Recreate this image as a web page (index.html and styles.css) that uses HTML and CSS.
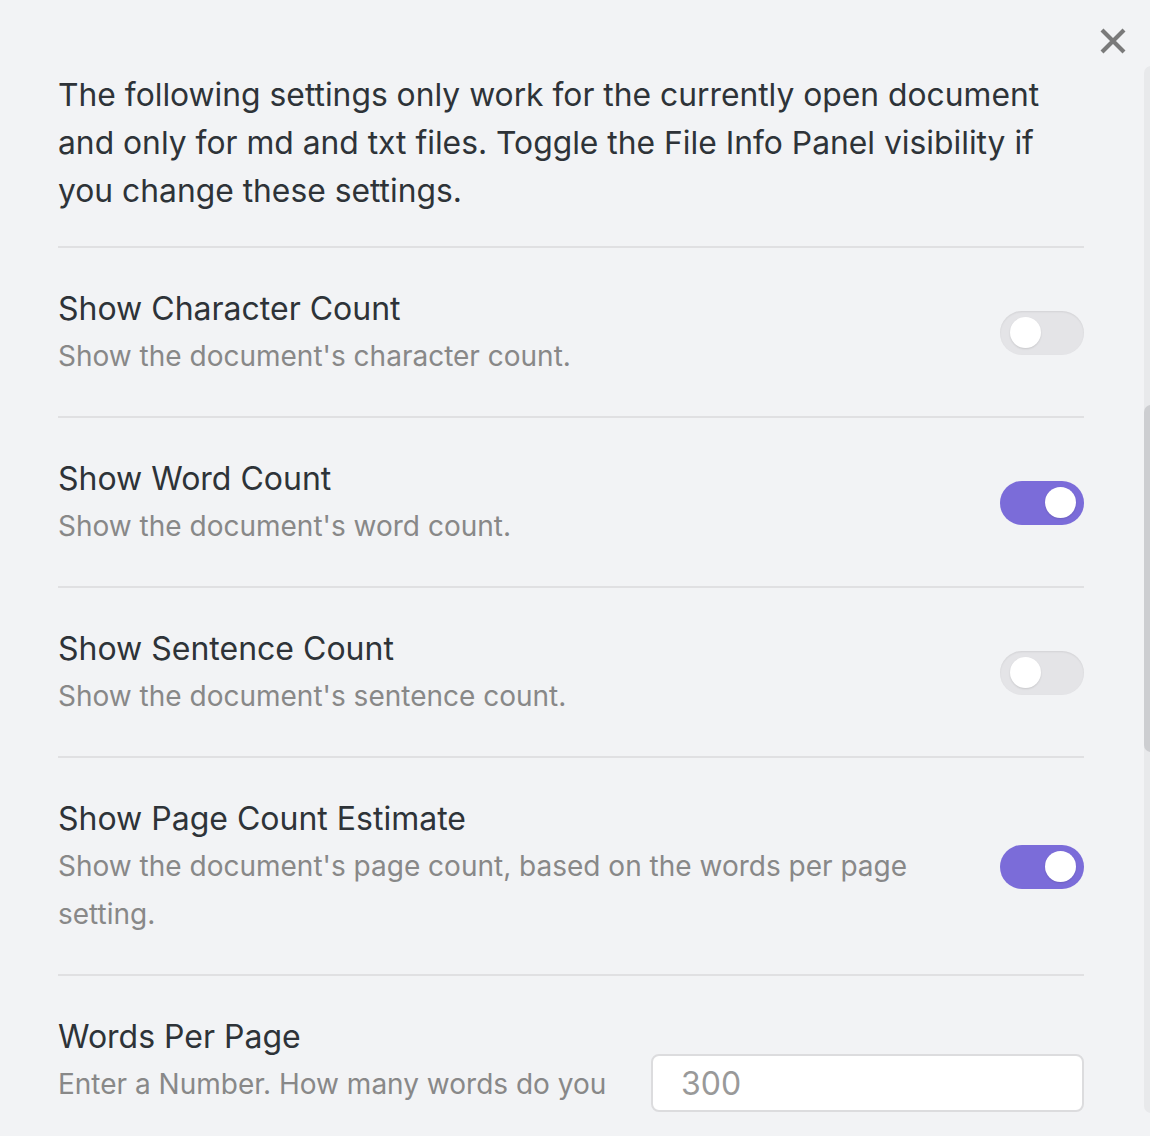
FILE: index.html
```html
<!DOCTYPE html>
<html lang="en">
<head>
<meta charset="utf-8">
<title>File Info Panel settings</title>
<link rel="stylesheet" href="styles.css">
</head>
<body>
<div class="modal">
  <button class="close" aria-label="Close">
    <svg viewBox="0 0 30 30" width="30" height="30"><path d="M4 4 L26 26 M26 4 L4 26" stroke="#7a7a7a" stroke-width="4.2" fill="none"/></svg>
  </button>
  <div class="content">
    <p class="intro">The following settings only work for the currently open document and only for md and txt files. Toggle the File Info Panel visibility if you change these settings.</p>

    <div class="item">
      <div class="info">
        <div class="name">Show Character Count</div>
        <div class="desc">Show the document's character count.</div>
      </div>
      <div class="control"><div class="toggle"><span class="knob"></span></div></div>
    </div>

    <div class="item">
      <div class="info">
        <div class="name">Show Word Count</div>
        <div class="desc">Show the document's word count.</div>
      </div>
      <div class="control"><div class="toggle on"><span class="knob"></span></div></div>
    </div>

    <div class="item">
      <div class="info">
        <div class="name">Show Sentence Count</div>
        <div class="desc">Show the document's sentence count.</div>
      </div>
      <div class="control"><div class="toggle"><span class="knob"></span></div></div>
    </div>

    <div class="item">
      <div class="info">
        <div class="name">Show Page Count Estimate</div>
        <div class="desc">Show the document's page count, based on the words per page setting.</div>
      </div>
      <div class="control"><div class="toggle on"><span class="knob"></span></div></div>
    </div>

    <div class="item top">
      <div class="info">
        <div class="name">Words Per Page</div>
        <div class="desc">Enter a Number. How many words do you</div>
      </div>
      <div class="control wide"><input class="text" type="text" placeholder="300"></div>
    </div>
  </div>
  <div class="scroll-track"><div class="scroll-thumb"></div></div>
</div>
</body>
</html>
```

FILE: styles.css
```css
html, body {
  margin: 0;
  padding: 0;
  background: #f2f3f5;
  height: 100%;
  overflow: hidden;
}
body {
  font-family: Inter, "Noto Sans", sans-serif;
  color: #2e3338;
}
.modal {
  position: relative;
  height: 1136px;
  overflow: hidden;
}
.close {
  position: absolute;
  top: 26px;
  right: 22px;
  width: 30px;
  height: 30px;
  padding: 0;
  border: 0;
  background: transparent;
  cursor: pointer;
}
.close svg { display: block; }
.content {
  padding: 71px 66px 0 58px;
}
.intro {
  margin: 0 0 31px 0;
  font-size: 31.8px;
  line-height: 48px;
}
.item {
  display: flex;
  align-items: center;
  border-top: 2px solid #e0e0e2;
  padding: 37px 0 36px 0;
}
.item.top {
  align-items: flex-start;
}
.info {
  flex: 1 1 auto;
  margin-right: 32px;
}
.name {
  font-size: 32px;
  line-height: 47px;
  color: #2e3338;
}
.desc {
  font-size: 28px;
  line-height: 48px;
  color: #888888;
}
.control {
  flex: 0 0 auto;
  display: flex;
  justify-content: flex-end;
}
.control.wide {
  width: 433px;
  margin-top: 41px;
}
.toggle {
  width: 84px;
  height: 44px;
  border-radius: 22px;
  background: #e4e4e7;
  box-shadow: inset 0 1px 2px rgba(0,0,0,0.08);
  position: relative;
}
.toggle .knob {
  position: absolute;
  top: 6px;
  left: 10px;
  width: 31px;
  height: 31px;
  border-radius: 50%;
  background: #ffffff;
  box-shadow: 0 1px 2px rgba(0,0,0,0.12);
}
.toggle.on {
  background: #7b6cd9;
  box-shadow: none;
}
.toggle.on .knob {
  left: auto;
  right: 8px;
}
.text {
  box-sizing: border-box;
  width: 433px;
  height: 58px;
  border: 2px solid #dcdcde;
  border-radius: 8px;
  background: #ffffff;
  font-family: Inter, "Noto Sans", sans-serif;
  font-size: 32px;
  padding: 0 28px;
  color: #2e3338;
}
.text::placeholder {
  color: #999999;
}
.scroll-track {
  position: absolute;
  top: 66px;
  left: 1144px;
  width: 14px;
  height: 1047px;
  border-radius: 8px;
  background: #e8e9eb;
}
.scroll-thumb {
  position: absolute;
  top: 339px;
  left: 0;
  width: 14px;
  height: 347px;
  border-radius: 8px;
  background: #cdced1;
}
```
